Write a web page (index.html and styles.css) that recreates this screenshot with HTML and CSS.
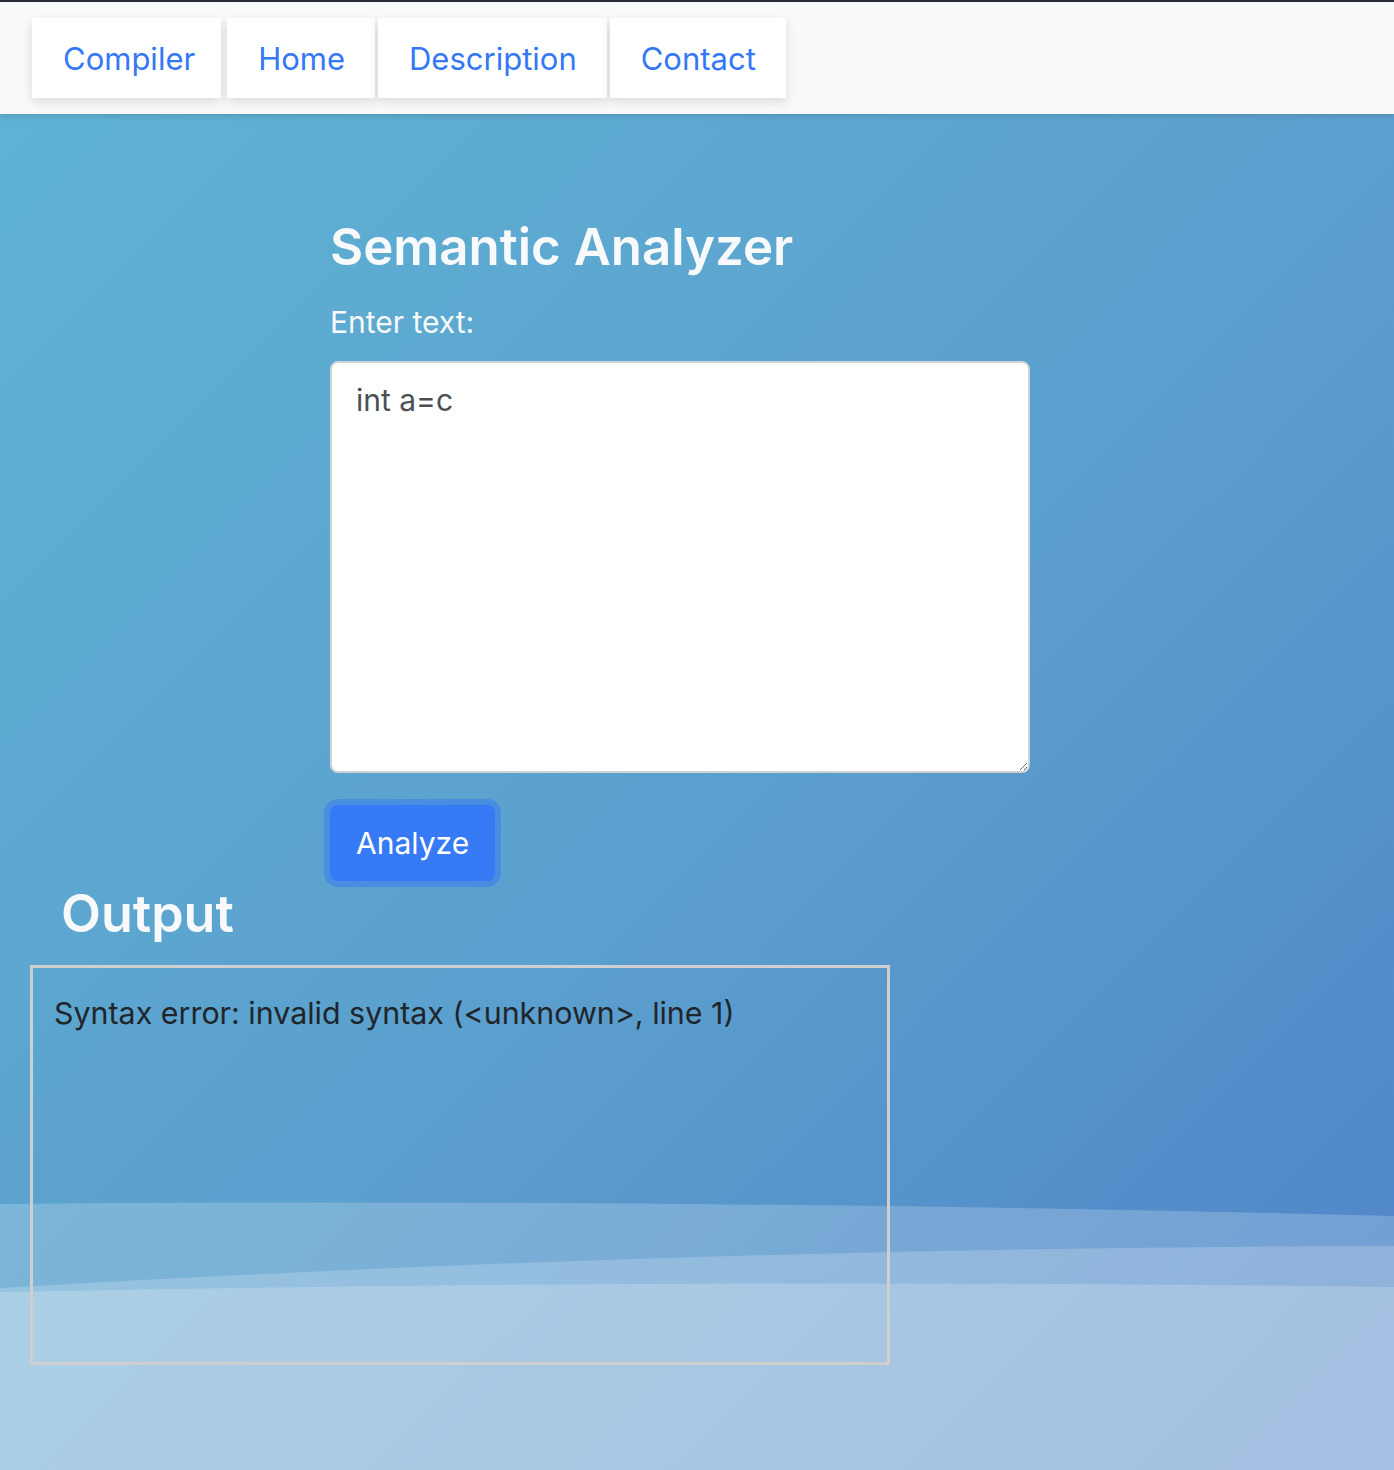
FILE: index.html
```html
<!DOCTYPE html>
<html lang="en">
<head>
<meta charset="utf-8">
<title>Semantic Analyzer</title>
<link rel="stylesheet" href="styles.css">
</head>
<body>
<nav class="navbar">
  <a class="nav-item brand" href="#">Compiler</a>
  <a class="nav-item" href="#">Home</a>
  <a class="nav-item" href="#">Description</a>
  <a class="nav-item" href="#">Contact</a>
</nav>
<main class="hero">
  <svg class="waves" viewBox="0 0 1394 270" preserveAspectRatio="none" aria-hidden="true">
    <path d="M0 4 Q697 -2 1394 16 L1394 270 L0 270 Z" fill="#ffffff" fill-opacity="0.2"/>
    <path d="M0 88 Q697 47 1394 46 L1394 270 L0 270 Z" fill="#ffffff" fill-opacity="0.2"/>
    <path d="M0 92 Q697 78 1394 87 L1394 270 L0 270 Z" fill="#ffffff" fill-opacity="0.2"/>
  </svg>
  <section class="analyzer">
    <h1 class="title">Semantic Analyzer</h1>
    <label class="field-label" for="code">Enter text:</label>
    <textarea id="code" class="code-input">int a=c</textarea>
    <button class="analyze-btn" type="button">Analyze</button>
  </section>
  <section class="output">
    <h2 class="output-title">Output</h2>
    <div class="output-box">Syntax error: invalid syntax (&lt;unknown&gt;, line 1)</div>
  </section>
</main>
</body>
</html>
```
FILE: styles.css
```css
* { box-sizing: border-box; }

html, body {
  margin: 0;
  padding: 0;
}

body {
  font-family: Inter, "Liberation Sans", sans-serif;
  color: #212529;
  background: #a9c6e6;
}

.navbar {
  position: relative;
  z-index: 2;
  display: flex;
  align-items: stretch;
  gap: 3px;
  height: 114px;
  padding: 16px 32px 16px 32px;
  background: #f8f9fa;
  border-top: 2px solid #272c38;
  box-shadow: 0 2px 6px rgba(0, 0, 0, 0.12);
}

.nav-item {
  display: flex;
  align-items: center;
  padding: 0 30px 0 31px;
  background: #ffffff;
  color: #3478f6;
  font-size: 31px;
  text-decoration: none;
  box-shadow: 0 4px 10px rgba(0, 0, 0, 0.12);
}

.brand {
  margin-right: 3px;
  padding: 0 26px 0 31px;
}

.hero {
  position: relative;
  min-height: 1356px;
  padding-top: 102px;
  padding-bottom: 40px;
  background: linear-gradient(135deg, #5fb2d4 0%, #5ba0ce 50%, #5083c8 100%);
  overflow: hidden;
}

.waves {
  position: absolute;
  left: 0;
  bottom: 0;
  width: 100%;
  height: 270px;
  z-index: 0;
}

.analyzer,
.output {
  position: relative;
  z-index: 1;
}

.analyzer {
  margin-left: 330px;
  width: 700px;
}

.title {
  margin: 0;
  font-size: 51px;
  line-height: 1.2;
  font-weight: 600;
  color: #f8f9fa;
}

.field-label {
  display: block;
  margin-top: 23px;
  font-size: 30px;
  line-height: 1.5;
  color: #f8f9fa;
}

.code-input {
  display: block;
  width: 700px;
  height: 412px;
  margin-top: 16px;
  padding: 15px 24px;
  font-family: Inter, "Liberation Sans", sans-serif;
  font-size: 30px;
  line-height: 1.5;
  color: #495057;
  background: #ffffff;
  border: 2px solid #cfd3d7;
  border-radius: 8px;
  resize: both;
}

.analyze-btn {
  display: block;
  margin-top: 32px;
  height: 76px;
  padding: 0 26px;
  font-family: Inter, "Liberation Sans", sans-serif;
  font-size: 30px;
  color: #ffffff;
  background: #367af6;
  border: none;
  border-radius: 8px;
  box-shadow: 0 0 0 6px rgba(56, 124, 240, 0.55);
}

.output-title {
  margin: 2px 0 0 61px;
  font-size: 52px;
  line-height: 1.2;
  font-weight: 600;
  color: #f8f9fa;
}

.output-box {
  width: 860px;
  height: 400px;
  margin: 19px 0 0 30px;
  padding: 23px 21px;
  font-size: 30.4px;
  line-height: 1.5;
  color: #212529;
  border: 3px solid #cfcfcf;
}
```
